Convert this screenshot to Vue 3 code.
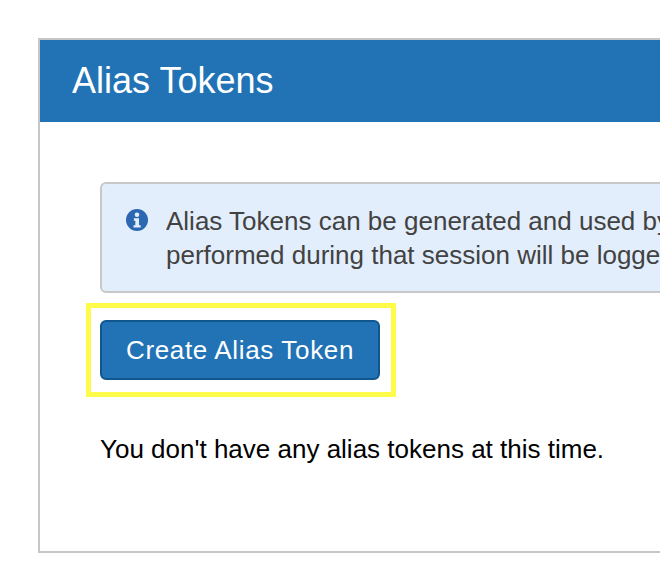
<template>
  <div class="page">
    <section class="panel">
      <header class="panel__header">
        <h1 class="panel__title">Alias Tokens</h1>
      </header>
      <div class="panel__body">
        <div class="alert">
          <svg class="alert__icon" viewBox="0 0 24 24" aria-hidden="true">
            <circle cx="12" cy="12" r="12" fill="#2b68b1" />
            <circle cx="12" cy="6.2" r="2.5" fill="#e2eefc" />
            <path d="M8.6 10.2h5.6v7.4h1.8v2.6H8.2v-2.6h2v-4.8H8.6z" fill="#e2eefc" />
          </svg>
          <p class="alert__text">
            Alias Tokens can be generated and used by<br />
            performed during that session will be logged
          </p>
        </div>
        <div class="highlight">
          <button class="btn" type="button">Create Alias Token</button>
        </div>
        <p class="empty">You don't have any alias tokens at this time.</p>
      </div>
    </section>
  </div>
</template>

<script setup>
</script>

<style>
html,
body {
  margin: 0;
  background: #fff;
  overflow: hidden;
}
</style>

<style scoped>
.page {
  width: 660px;
  height: 582px;
  padding: 38px 0 0 38px;
  box-sizing: border-box;
  overflow: hidden;
  font-family: "Liberation Sans", Arial, sans-serif;
}

.panel {
  width: 760px;
  height: 515px;
  box-sizing: border-box;
  border: 2px solid #c6c6c6;
}

.panel__header {
  height: 82px;
  display: flex;
  align-items: center;
  padding-left: 32px;
  background: #2173b6;
}

.panel__title {
  margin: 0;
  font-size: 36px;
  font-weight: 400;
  color: #fff;
}

.panel__body {
  padding: 60px 0 0 60px;
}

.alert {
  width: 700px;
  height: 111px;
  box-sizing: border-box;
  display: flex;
  gap: 18px;
  padding: 20px 0 0 24px;
  background: #e2eefc;
  border: 2px solid #c8c8c8;
  border-radius: 6px;
}

.alert__icon {
  flex: none;
  width: 22px;
  height: 22px;
  margin-top: 5px;
}

.alert__text {
  margin: 0;
  font-size: 26px;
  line-height: 34px;
  color: #424242;
  white-space: nowrap;
}

.highlight {
  position: relative;
  width: 280px;
  margin-top: 27px;
}

.highlight::after {
  content: "";
  position: absolute;
  inset: -17px -16px -17px -14px;
  border: 5px solid #fffb4b;
  pointer-events: none;
}

.btn {
  display: block;
  width: 280px;
  height: 60px;
  padding: 0;
  background: #2173b6;
  border: 2px solid #12568e;
  border-radius: 6px;
  font-family: inherit;
  font-size: 26px;
  letter-spacing: 0.65px;
  color: #fff;
}

.empty {
  margin: 52px 0 0;
  font-size: 26px;
  line-height: 34px;
  color: #000;
}
</style>
